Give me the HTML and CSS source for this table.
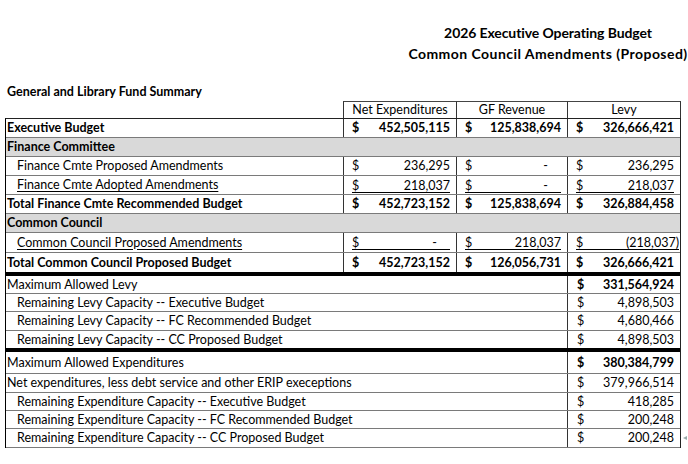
FILE: index.html
```html
<!DOCTYPE html>
<html>
<head>
<meta charset="utf-8">
<link rel="stylesheet" href="styles.css">
</head>
<body>
<div class="page">
  <header class="title">
    <div class="t1">2026 Executive Operating Budget</div>
    <div class="t2">Common Council Amendments (Proposed)</div>
  </header>
  <div class="subtitle">General and Library Fund Summary</div>

  <div class="sheet">
    <div class="row head">
      <div class="c"></div>
      <div class="c hc">Net Expenditures</div>
      <div class="c hc">GF Revenue</div>
      <div class="c hc last">Levy</div>
    </div>

    <div class="body">
      <div class="row data first b h19">
        <div class="c lab">Executive Budget</div>
        <div class="c num"><span>$</span><span>452,505,115</span></div>
        <div class="c num"><span>$</span><span>125,838,694</span></div>
        <div class="c num"><span>$</span><span>326,666,421</span></div>
      </div>
      <div class="row band b h19">
        <div class="c lab">Finance Committee</div>
      </div>
      <div class="row data h19">
        <div class="c lab ind">Finance Cmte Proposed Amendments</div>
        <div class="c num"><span>$</span><span>236,295</span></div>
        <div class="c num"><span>$</span><span class="dash">-</span></div>
        <div class="c num"><span>$</span><span>236,295</span></div>
      </div>
      <div class="row data h19">
        <div class="c lab ind"><span class="ul">Finance Cmte Adopted Amendments</span></div>
        <div class="c num u"><div class="acct"><span>$</span><span>218,037</span></div></div>
        <div class="c num u"><div class="acct"><span>$</span><span class="dash">-</span></div></div>
        <div class="c num u"><div class="acct"><span>$</span><span>218,037</span></div></div>
      </div>
      <div class="row data b h19">
        <div class="c lab">Total Finance Cmte Recommended Budget</div>
        <div class="c num"><span>$</span><span>452,723,152</span></div>
        <div class="c num"><span>$</span><span>125,838,694</span></div>
        <div class="c num"><span>$</span><span>326,884,458</span></div>
      </div>
      <div class="row band b h19">
        <div class="c lab">Common Council</div>
      </div>
      <div class="row data h20">
        <div class="c lab ind"><span class="ul">Common Council Proposed Amendments</span></div>
        <div class="c num u"><div class="acct"><span>$</span><span class="dash">-</span></div></div>
        <div class="c num u"><div class="acct"><span>$</span><span>218,037</span></div></div>
        <div class="c num u neg"><div class="acct"><span>$</span><span>(218,037)</span></div></div>
      </div>
      <div class="row data b thick h19">
        <div class="c lab">Total Common Council Proposed Budget</div>
        <div class="c num"><span>$</span><span>452,723,152</span></div>
        <div class="c num"><span>$</span><span>126,056,731</span></div>
        <div class="c num"><span>$</span><span>326,666,421</span></div>
      </div>

      <div class="row wide h18">
        <div class="c lab">Maximum Allowed Levy</div>
        <div class="c num b"><span>$</span><span>331,564,924</span></div>
      </div>
      <div class="row wide h18">
        <div class="c lab ind">Remaining Levy Capacity -- Executive Budget</div>
        <div class="c num"><span>$</span><span>4,898,503</span></div>
      </div>
      <div class="row wide h19">
        <div class="c lab ind">Remaining Levy Capacity -- FC Recommended Budget</div>
        <div class="c num"><span>$</span><span>4,680,466</span></div>
      </div>
      <div class="row wide thick h17">
        <div class="c lab ind">Remaining Levy Capacity -- CC Proposed Budget</div>
        <div class="c num"><span>$</span><span>4,898,503</span></div>
      </div>

      <div class="row wide h22">
        <div class="c lab">Maximum Allowed Expenditures</div>
        <div class="c num b"><span>$</span><span>380,384,799</span></div>
      </div>
      <div class="row wide h19">
        <div class="c lab">Net expenditures, less debt service and other ERIP execeptions</div>
        <div class="c num"><span>$</span><span>379,966,514</span></div>
      </div>
      <div class="row wide h18">
        <div class="c lab ind">Remaining Expenditure Capacity -- Executive Budget</div>
        <div class="c num"><span>$</span><span>418,285</span></div>
      </div>
      <div class="row wide h18">
        <div class="c lab ind">Remaining Expenditure Capacity -- FC Recommended Budget</div>
        <div class="c num"><span>$</span><span>200,248</span></div>
      </div>
      <div class="row wide h19">
        <div class="c lab ind">Remaining Expenditure Capacity -- CC Proposed Budget</div>
        <div class="c num"><span>$</span><span>200,248</span></div>
        <span class="handle"></span>
      </div>
    </div>
  </div>
</div>
</body>
</html>
```

FILE: styles.css
```css
* { box-sizing: border-box; }
html, body { margin: 0; padding: 0; background: #fff; }
body {
  width: 688px;
  height: 464px;
  overflow: hidden;
  font-family: Lato, "Liberation Sans", sans-serif;
  color: #000;
}
.page { position: relative; }

.title {
  margin: 22px 0 0 400px;
  width: 296px;
  text-align: center;
  font-weight: 700;
  font-size: 14px;
  line-height: 21px;
  white-space: nowrap;
}
.title .t1 { letter-spacing: -0.1px; }
.title .t2 { letter-spacing: 0.45px; }

.subtitle {
  margin: 19px 0 0 7px;
  font-weight: 700;
  font-size: 12.5px;
  line-height: 18px;
}

.sheet {
  margin: 0 0 0 5px;
  width: 676px;
  font-size: 12.5px;
}

.row {
  display: grid;
  grid-template-columns: 338px 113px 111px 114px;
  align-items: stretch;
  position: relative;
}
.c {
  display: flex;
  align-items: center;
  white-space: nowrap;
  line-height: 14px;
}

.head { height: 17px; }
.head .hc {
  justify-content: center;
  border-top: 1px solid #444;
  border-left: 1px solid #333;
}
.head .hc.last { border-right: 1px solid #333; }

.body {
  border-top: 1px solid #222;
  border-left: 1px solid #000;
  border-right: 1px solid #222;
}
.body .row { grid-template-columns: 337px 113px 111px 113px; }
.data, .band, .wide { border-bottom: 1px solid #7a7a7a; }

.h17 { height: 17px; }
.h18 { height: 18px; }
.h19 { height: 19px; }
.h20 { height: 20px; }
.h22 { height: 22px; }

.thick { border-bottom: 4px solid #000; }
.thick.h19 { height: 23px; }
.thick.h17 { height: 21px; }

.b { font-weight: 700; }

.lab { padding-left: 1px; }
.lab.ind { padding-left: 11px; }
.ul { text-decoration: underline; text-underline-offset: 2px; }

.num {
  justify-content: space-between;
  padding: 0 6px 0 8px;
  border-left: 1px solid #333;
}

.band { background: #d9d9d9; }
.band .lab { grid-column: 1 / -1; }

.wide .lab { grid-column: 1 / 4; }
.wide .num { padding-left: 9px; }

.num .dash { margin-right: 13px; }

.acct {
  flex: 1;
  display: flex;
  justify-content: space-between;
  line-height: 13px;
  border-bottom: 1px solid #000;
  margin-top: 1px;
}
.neg { padding-right: 1px; }

.handle {
  position: absolute;
  right: -7px;
  top: 7px;
  width: 0;
  height: 0;
  border-top: 2px solid transparent;
  border-bottom: 2px solid transparent;
  border-right: 4px solid #9aa;
}
```
